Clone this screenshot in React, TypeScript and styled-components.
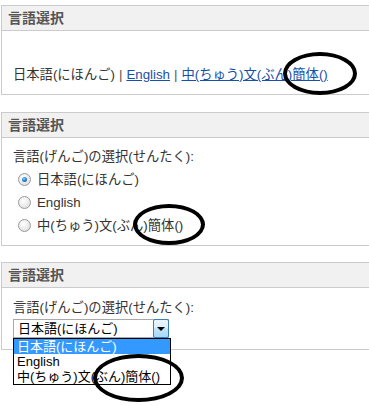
import React from "react";
import styled, { createGlobalStyle } from "styled-components";

const Global = createGlobalStyle`
  html, body { margin: 0; padding: 0; background: #fff; overflow: hidden; }
  body { font-family: "Liberation Sans", "Noto Sans CJK JP", sans-serif; }
`;

const Page = styled.div`
  position: relative;
  width: 369px;
  height: 405px;
  overflow: hidden;
  padding: 5px 0 0 1px;
  box-sizing: border-box;
  display: flex;
  flex-direction: column;
  color: #333;
  font-size: 13.3px;
`;

const Panel = styled.section<{ $gap?: number }>`
  width: 440px;
  border: 1px solid #cbcbcb;
  margin-bottom: ${(p) => p.$gap ?? 0}px;
  background: #fff;
  flex-shrink: 0;
`;

const Header = styled.div`
  height: 24px;
  line-height: 24px;
  background: #f1f1f1;
  border-bottom: 1px solid #cbcbcb;
  padding-left: 6px;
  font-weight: bold;
  font-size: 14px;
  color: #555;
`;

const Body = styled.div<{ $pt: number; $pb: number }>`
  padding: ${(p) => p.$pt}px 11px ${(p) => p.$pb}px 11px;
  display: flex;
  flex-direction: column;
`;

const Line = styled.div<{ $h: number }>`
  height: ${(p) => p.$h}px;
  line-height: ${(p) => p.$h}px;
  display: flex;
  align-items: center;
  white-space: nowrap;
`;

const Link = styled.a`
  color: #1750a6;
  text-decoration: underline;
  cursor: pointer;
`;

const Sep = styled.span`
  color: #555;
  margin: 0 4px;
`;

const Radio = styled.span<{ $checked?: boolean }>`
  position: relative;
  width: 11px;
  height: 11px;
  margin-left: 5px;
  margin-right: 6px;
  border-radius: 50%;
  border: 1px solid #9a9a9a;
  background: radial-gradient(circle at 40% 35%, #ffffff 0%, #e4e4e4 70%, #d0d0d0 100%);
  box-sizing: content-box;
  flex-shrink: 0;
  &::after {
    content: "";
    display: ${(p) => (p.$checked ? "block" : "none")};
    position: absolute;
    left: 3px;
    top: 3px;
    width: 5px;
    height: 5px;
    border-radius: 50%;
    background: radial-gradient(circle at 40% 35%, #8fd0ff 0%, #2a85d8 45%, #0b4c91 100%);
  }
`;

const SelectWrap = styled.div`
  position: relative;
  width: 156px;
  height: 19px;
`;

const SelectBox = styled.div`
  width: 156px;
  height: 19px;
  box-sizing: border-box;
  border: 1px solid #a9a9a9;
  background: #fff;
  display: flex;
  align-items: center;
  font-family: "Liberation Sans", "Noto Sans CJK JP", sans-serif;
  font-size: 13px;
  color: #000;
  padding-left: 4px;
`;

const SelectText = styled.span`
  flex: 1;
  line-height: 17px;
`;

const SelectButton = styled.span`
  width: 16px;
  height: 19px;
  margin: -1px -1px -1px 0;
  box-sizing: border-box;
  border: 1px solid #3c7fb1;
  border-radius: 2px;
  background: linear-gradient(#eaf6fd, #d9f0fc 45%, #bee6fd 50%, #a7d9f5);
  display: flex;
  align-items: center;
  justify-content: center;
  &::after {
    content: "";
    border-left: 4px solid transparent;
    border-right: 4px solid transparent;
    border-top: 4px solid #000;
  }
`;

const DropList = styled.div`
  position: absolute;
  left: 0;
  top: 19px;
  width: 158px;
  box-sizing: border-box;
  border: 1px solid #000;
  background: #fff;
  font-family: "Liberation Sans", "Noto Sans CJK JP", sans-serif;
  font-size: 13px;
  color: #000;
  z-index: 2;
`;

const Option = styled.div<{ $active?: boolean }>`
  height: 15px;
  line-height: 15px;
  padding-left: 3px;
  white-space: nowrap;
  background: ${(p) => (p.$active ? "#3399ff" : "#fff")};
  color: ${(p) => (p.$active ? "#fff" : "#000")};
`;

const Circle = styled.div`
  position: absolute;
  border: 4px solid #000;
  border-radius: 50%;
  box-sizing: border-box;
  pointer-events: none;
  z-index: 5;
`;

const label = "言語(げんご)の選択(せんたく):";
const ja = "日本語(にほんご)";
const zh = "中(ちゅう)文(ぶん)簡体()";

export default function App() {
  return (
    <>
      <Global />
      <Page>
        <Panel $gap={17}>
          <Header>言語選択</Header>
          <Body $pt={34} $pb={10}>
            <Line $h={19}>
              <span>{ja}</span>
              <Sep>|</Sep>
              <Link>English</Link>
              <Sep>|</Sep>
              <Link>{zh}</Link>
            </Line>
          </Body>
        </Panel>

        <Panel $gap={16}>
          <Header>言語選択</Header>
          <Body $pt={8} $pb={8}>
            <Line $h={22}>{label}</Line>
            <Line $h={23}>
              <Radio $checked />
              {ja}
            </Line>
            <Line $h={23}>
              <Radio />
              English
            </Line>
            <Line $h={23}>
              <Radio />
              {zh}
            </Line>
          </Body>
        </Panel>

        <Panel>
          <Header>言語選択</Header>
          <Body $pt={9} $pb={11}>
            <Line $h={22}>{label}</Line>
            <SelectWrap>
              <SelectBox>
                <SelectText>{ja}</SelectText>
                <SelectButton />
              </SelectBox>
              <DropList>
                <Option $active>{ja}</Option>
                <Option>English</Option>
                <Option>{zh}</Option>
              </DropList>
            </SelectWrap>
          </Body>
        </Panel>

        <Circle style={{ left: 283, top: 52, width: 74, height: 43 }} />
        <Circle style={{ left: 133, top: 204, width: 72, height: 41 }} />
        <Circle style={{ left: 93, top: 354, width: 91, height: 48 }} />
      </Page>
    </>
  );
}
